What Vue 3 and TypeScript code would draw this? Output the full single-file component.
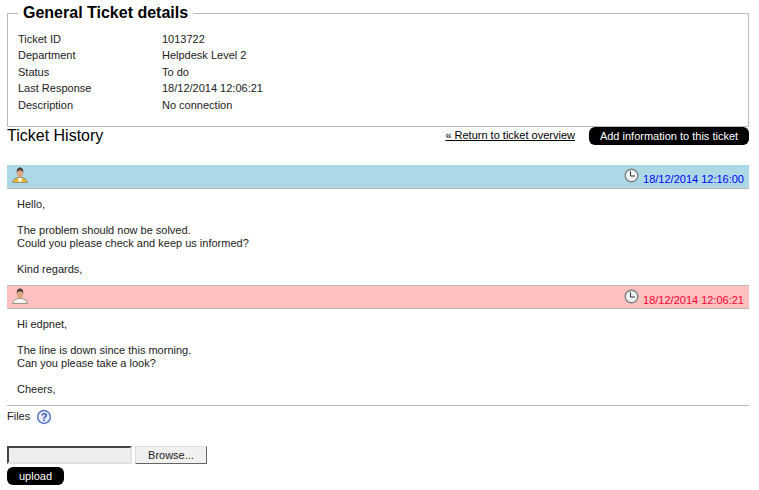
<template>
  <div class="page">
    <fieldset class="details">
      <legend>General Ticket details</legend>
      <div class="detail-grid">
        <template v-for="row in details" :key="row.label">
          <span>{{ row.label }}</span>
          <span>{{ row.value }}</span>
        </template>
      </div>
    </fieldset>

    <div class="history-head">
      <h2>Ticket History</h2>
      <a class="back" href="#">« Return to ticket overview</a>
      <button class="black-btn add">Add information to this ticket</button>
    </div>

    <div v-for="msg in messages" :key="msg.date" class="message">
      <div class="bar" :class="msg.kind">
        <svg class="person" width="16" height="16" viewBox="0 0 16 16">
          <path d="M.5 15.5 C1 12.5 3.5 11.2 5.8 10.5 L10.2 10.5 C12.5 11.2 15 12.5 15.5 15.5 Z" :fill="msg.kind === 'blue' ? '#e6b62c' : '#f4f1f1'" stroke="#8a8270" stroke-width=".8" />
          <rect x="6.4" y="11" width="3.2" height="3.6" fill="#fff" />
          <ellipse cx="8" cy="5.8" rx="3" ry="4.6" fill="#dfa481" />
          <path d="M4.8 6 C4.2 1.8 6.2 .4 8 .4 C9.8 .4 11.8 1.8 11.2 6 C10.8 4 9.8 3.2 8 3.2 C6.2 3.2 5.2 4 4.8 6 Z" fill="#4b3f3c" />
        </svg>
        <span class="stamp">
          <svg class="clock" width="15" height="15" viewBox="0 0 15 15">
            <circle cx="7.5" cy="7.5" r="6.3" fill="#f1f3f3" stroke="#7c8283" stroke-width="1.4" />
            <path d="M6.5 3.2 V8 H11" fill="none" stroke="#333" stroke-width="1" />
          </svg>
          <span class="date">{{ msg.date }}</span>
        </span>
      </div>
      <div class="body">
        <p v-for="(para, i) in msg.paragraphs" :key="i">
          <template v-for="(line, j) in para" :key="j">{{ line }}<br /></template>
        </p>
      </div>
    </div>

    <div class="files">
      <div class="files-label">
        <span>Files</span>
        <svg width="16" height="16" viewBox="0 0 16 16">
          <circle cx="8" cy="8" r="6.4" fill="#e6ebfa" stroke="#5a74c8" stroke-width="1.5" />
          <text x="8" y="12" text-anchor="middle" class="q">?</text>
        </svg>
      </div>
      <div class="picker">
        <div class="file-input"></div>
        <div class="browse">Browse...</div>
      </div>
      <button class="black-btn upload">upload</button>
    </div>
  </div>
</template>

<script setup lang="ts">
const details = [
  { label: "Ticket ID", value: "1013722" },
  { label: "Department", value: "Helpdesk Level 2" },
  { label: "Status", value: "To do" },
  { label: "Last Response", value: "18/12/2014 12:06:21" },
  { label: "Description", value: "No connection" },
];

const messages = [
  {
    kind: "blue",
    date: "18/12/2014 12:16:00",
    paragraphs: [["Hello,"], ["The problem should now be solved.", "Could you please check and keep us informed?"], ["Kind regards,"]],
  },
  {
    kind: "pink",
    date: "18/12/2014 12:06:21",
    paragraphs: [["Hi edpnet,"], ["The line is down since this morning.", "Can you please take a look?"], ["Cheers,"]],
  },
];
</script>

<style>
body {
  background: #fff;
}
</style>

<style scoped>
.page {
  width: 742px;
  padding: 0 0 0 7px;
  font-family: "Liberation Sans", Arial, sans-serif;
  font-size: 11px;
  line-height: 13px;
  color: #222;
}

.details {
  margin: 4px 0 0;
  padding: 8.6px 10px 0;
  height: 123px;
  box-sizing: border-box;
  border: 1px solid #bbb;
}

legend {
  padding: 0 5px;
  margin-left: 0;
  font-size: 16px;
  font-weight: bold;
  line-height: 18px;
  color: #000;
}

.detail-grid {
  display: grid;
  grid-template-columns: 144px 1fr;
  grid-auto-rows: 16.6px;
  line-height: 16.6px;
}

.history-head {
  display: flex;
  align-items: flex-start;
  height: 38px;
}

h2 {
  margin: 0;
  margin-right: auto;
  font-size: 16px;
  font-weight: normal;
  line-height: 18px;
  color: #000;
}

.back {
  color: #000;
  margin-top: 2px;
  margin-right: 14px;
}

.black-btn {
  border: 0;
  padding: 0;
  border-radius: 6px;
  background: #000;
  color: #fff;
  font: inherit;
}

.add {
  width: 160px;
  height: 18px;
}

.bar {
  display: flex;
  justify-content: space-between;
  height: 24px;
  box-sizing: border-box;
  padding: 0 5px;
  border-bottom: 1px solid #bbb;
}

.bar.blue {
  background: #add8e6;
  color: #0000ff;
}

.bar.pink {
  background: #ffc0c0;
  color: #ff0033;
  border-top: 1px solid #bbb;
}

.person {
  margin-top: 2px;
}

.stamp {
  display: flex;
  align-items: flex-start;
  gap: 4px;
}

.clock {
  margin-top: 3px;
}

.date {
  margin-top: 8px;
}

.body {
  height: 96px;
  box-sizing: border-box;
  padding: 9px 0 0 10px;
}

.body p {
  margin: 0 0 13px;
}

.files {
  border-top: 1px solid #bbb;
}

.files-label {
  display: flex;
  align-items: center;
  gap: 6px;
  height: 21px;
}

.q {
  font-size: 11px;
  font-weight: bold;
  fill: #3a55b5;
}

.picker {
  display: flex;
  margin-top: 19px;
  height: 19px;
}

.file-input {
  width: 125px;
  height: 18px;
  box-sizing: border-box;
  background: #eee;
  border: 2px solid #e2e2e2;
  border-top-color: #444;
  border-left-color: #444;
}

.browse {
  width: 72px;
  height: 18px;
  margin-left: 3px;
  box-sizing: border-box;
  text-align: center;
  line-height: 16px;
  background: #f0f0f0;
  border: 1px solid #ddd;
  border-right-color: #666;
  border-bottom-color: #666;
}

.upload {
  display: block;
  margin-top: 2px;
  width: 57px;
  height: 18px;
}
</style>
